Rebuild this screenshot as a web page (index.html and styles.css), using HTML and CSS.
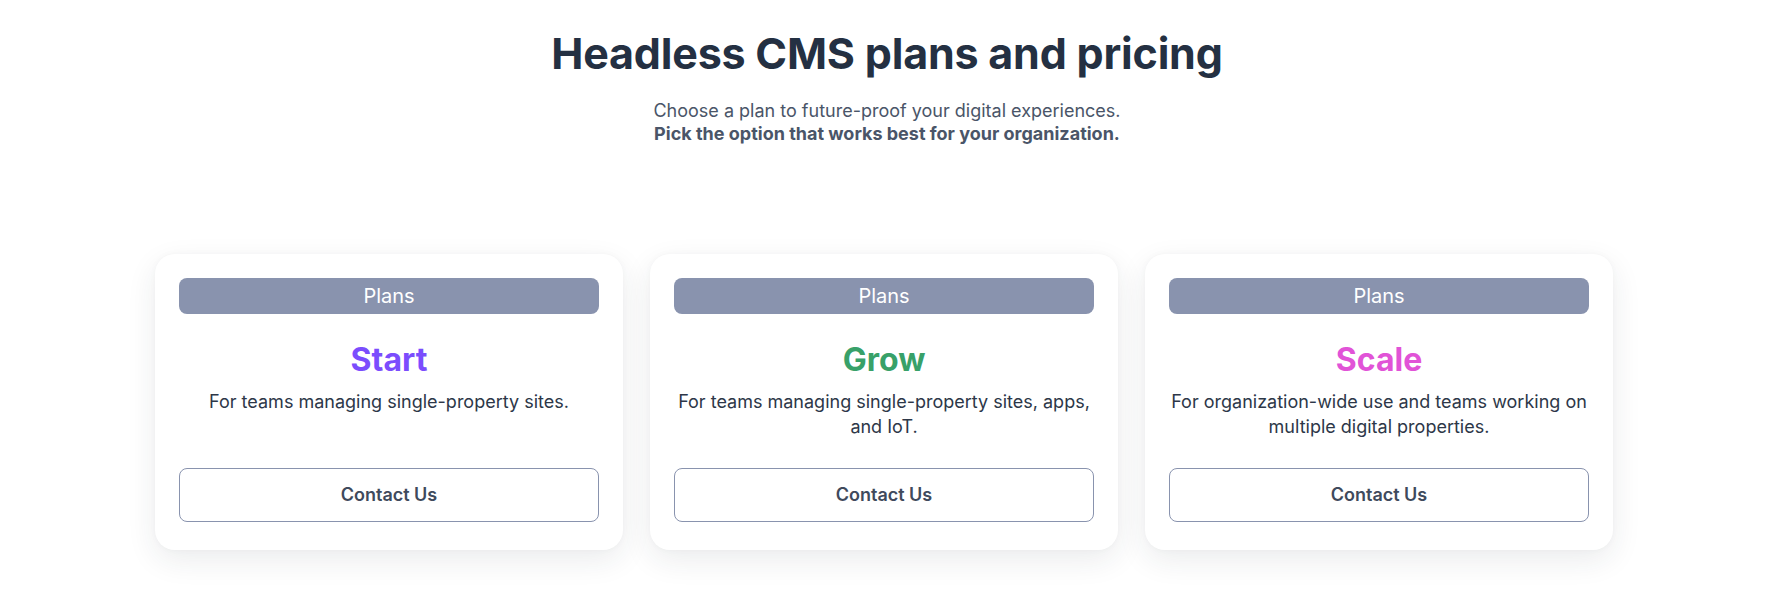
FILE: index.html
```html
<!DOCTYPE html>
<html lang="en">
<head>
<meta charset="utf-8">
<title>Headless CMS plans and pricing</title>
<link rel="stylesheet" href="styles.css">
</head>
<body>
<main class="page">
  <header class="intro">
    <h1 class="intro-title">Headless CMS plans and pricing</h1>
    <p class="intro-text">Choose a plan to future-proof your digital experiences.<br><strong>Pick the option that works best for your organization.</strong></p>
  </header>
  <section class="plans">
    <article class="card">
      <div class="card-tag">Plans</div>
      <h2 class="card-name card-name--start">Start</h2>
      <p class="card-desc">For teams managing single-property sites.</p>
      <a class="card-btn" href="#">Contact Us</a>
    </article>
    <article class="card">
      <div class="card-tag">Plans</div>
      <h2 class="card-name card-name--grow">Grow</h2>
      <p class="card-desc">For teams managing single-property sites, apps, and IoT.</p>
      <a class="card-btn" href="#">Contact Us</a>
    </article>
    <article class="card">
      <div class="card-tag">Plans</div>
      <h2 class="card-name card-name--scale">Scale</h2>
      <p class="card-desc">For organization-wide use and teams working on multiple digital properties.</p>
      <a class="card-btn" href="#">Contact Us</a>
    </article>
  </section>
</main>
</body>
</html>
```

FILE: styles.css
```css
* { box-sizing: border-box; }

html, body {
  margin: 0;
  padding: 0;
  background: #ffffff;
}

body {
  font-family: Inter, "Noto Sans", "Liberation Sans", sans-serif;
  color: #2d3748;
}

.page {
  display: flex;
  flex-direction: column;
  align-items: center;
  padding-top: 27px;
  padding-bottom: 58px;
}

.intro {
  text-align: center;
}

.intro-title {
  margin: 0;
  font-size: 43px;
  line-height: 53px;
  font-weight: 700;
  color: #243042;
  letter-spacing: -0.2px;
}

.intro-text {
  margin: 19px 0 0;
  font-size: 18px;
  line-height: 23px;
  color: #4a5568;
}

.intro-text strong {
  font-weight: 700;
  color: #4a5568;
}

.plans {
  display: flex;
  gap: 27px;
  margin-top: 109px;
  margin-right: 6px;
}

.card {
  width: 468px;
  display: flex;
  flex-direction: column;
  align-items: stretch;
  padding: 24px 24px 28px;
  background: #ffffff;
  border-radius: 20px;
  box-shadow: 0 10px 30px rgba(30, 40, 60, 0.09), 0 0 6px rgba(30, 40, 60, 0.03);
  text-align: center;
}

.card-tag {
  height: 36px;
  border-radius: 8px;
  background: #8993ae;
  color: #ffffff;
  font-size: 20px;
  line-height: 36px;
  font-weight: 400;
}

.card-name {
  margin: 26px 0 0;
  font-size: 32px;
  line-height: 40px;
  font-weight: 700;
}

.card-name--start { color: #7b4dfd; }
.card-name--grow { color: #38a169; }
.card-name--scale { color: #e153d7; }

.card-desc {
  margin: 9px 0 29px;
  font-size: 18px;
  line-height: 25px;
  color: #2d3748;
}

.card-btn {
  display: block;
  margin-top: auto;
  height: 54px;
  line-height: 52px;
  border: 1px solid #8993ae;
  border-radius: 8px;
  color: #3f4a5c;
  font-size: 18px;
  font-weight: 600;
  text-decoration: none;
}
```
